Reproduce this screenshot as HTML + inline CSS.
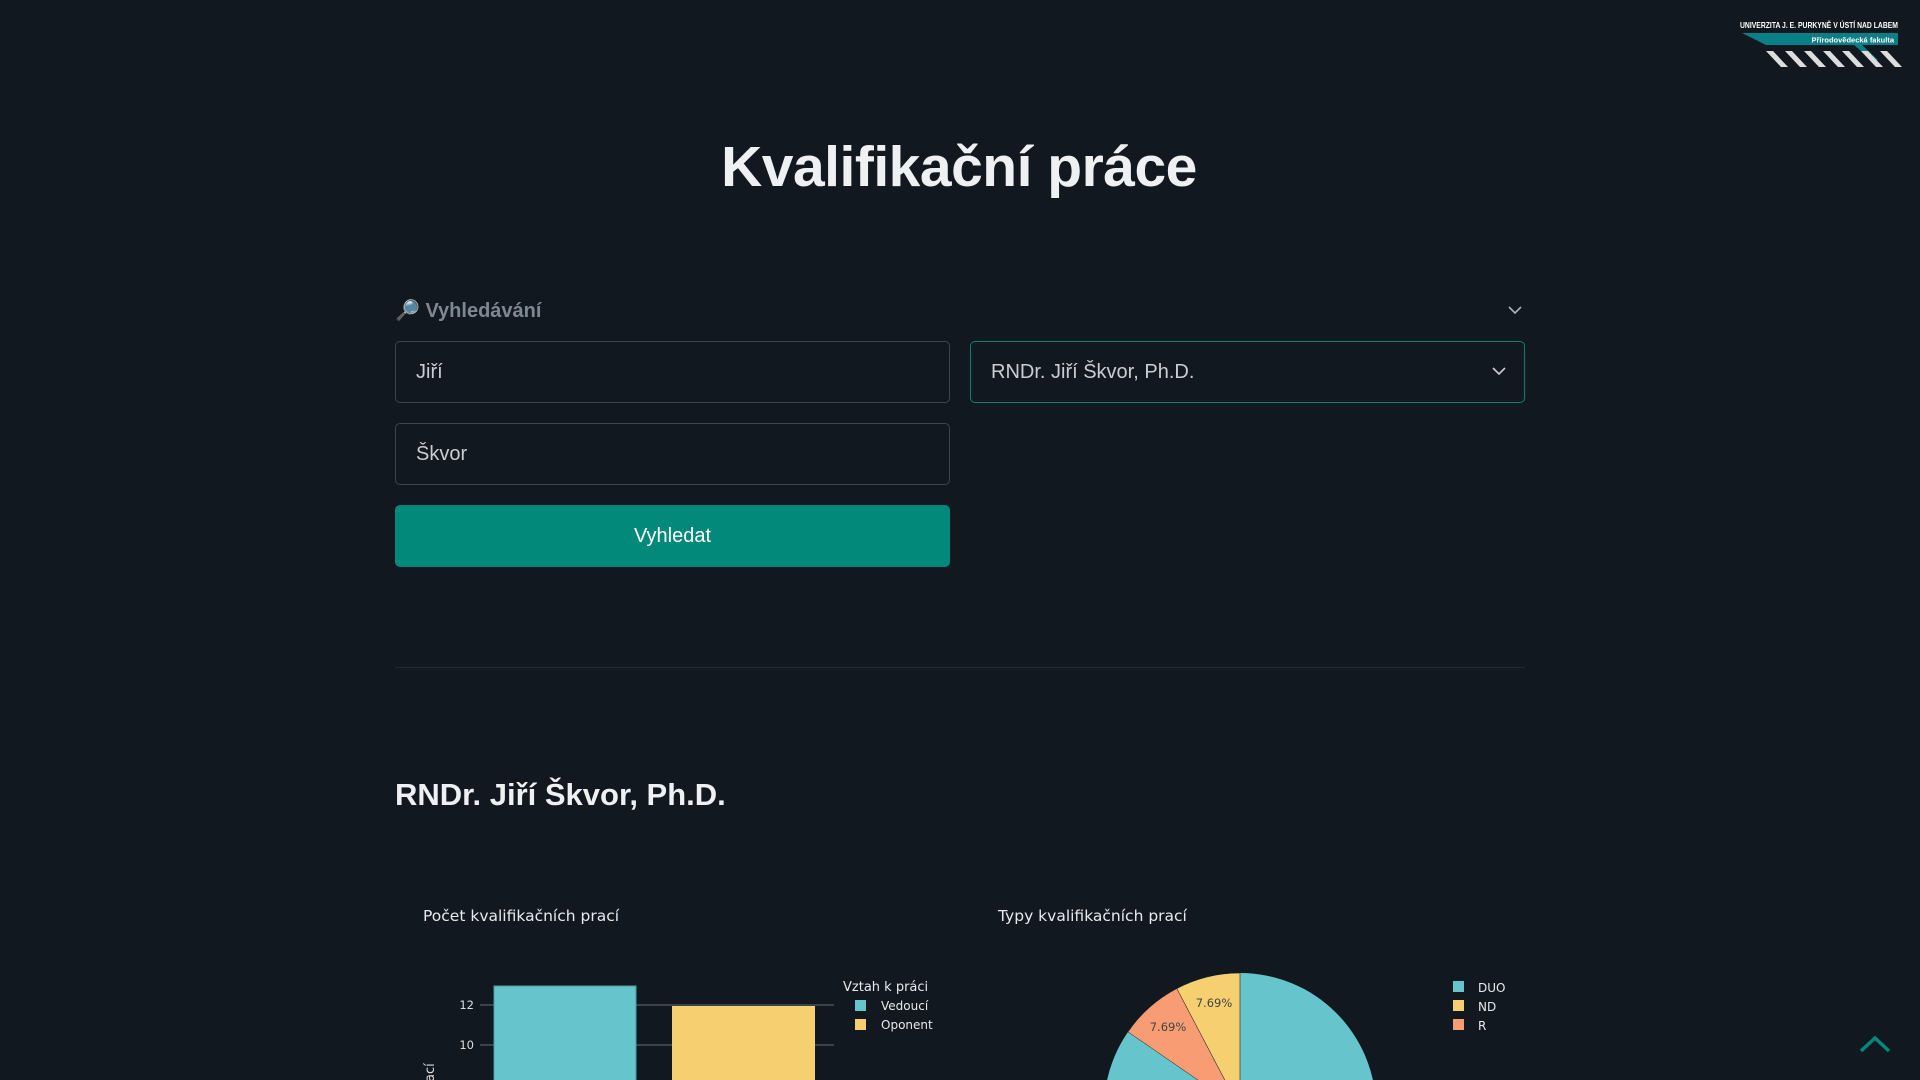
<!DOCTYPE html>
<html style="overflow:hidden"><head><meta charset="utf-8"><style>
*{margin:0;padding:0;box-sizing:border-box}
html,body{width:1920px;height:1080px;overflow:hidden}
body{background:#121820;font-family:"Liberation Sans",sans-serif;color:#e8eaed;position:relative}
.abs{position:absolute}
h1{position:absolute;left:0;width:1918px;text-align:center;top:134px;font-size:57px;font-weight:bold;color:#eef0f2;letter-spacing:-0.5px}
.inp{position:absolute;border:1px solid #3a4550;border-radius:5px;background:#121820;font-size:20px;color:#c9ced3;padding-left:20px;display:flex;align-items:center}
.btn{position:absolute;background:#02897a;border-radius:5px;color:#fff;font-size:20px;display:flex;align-items:center;justify-content:center}
.t{position:absolute;font-family:"DejaVu Sans",sans-serif;white-space:nowrap}
</style></head><body>
<svg class="abs" style="left:1736px;top:16px" width="184" height="60">
<text x="4" y="12" font-family="Liberation Sans" font-weight="bold" font-size="8.3" fill="#fff" textLength="158" lengthAdjust="spacingAndGlyphs">UNIVERZITA J. E. PURKYNĚ V ÚSTÍ NAD LABEM</text>
<polygon points="6,17 162,17 162,29 30,29" fill="#0b7f86"/>
<text x="158" y="26.5" text-anchor="end" font-family="Liberation Sans" font-weight="bold" font-size="7.5" fill="#fff">Přírodovědecká fakulta</text>
<polygon points="118,29 126,29 142,44 136,44" fill="#0b7f86"/>
<g fill="#ddd">
<polygon points="30,35 37,35 52,51 45,51"/><polygon points="49,35 56,35 71,51 64,51"/><polygon points="68,35 75,35 90,51 83,51"/><polygon points="87,35 94,35 109,51 102,51"/><polygon points="106,35 113,35 128,51 121,51"/><polygon points="125,35 132,35 147,51 140,51"/><polygon points="144,35 151,35 166,51 159,51"/></g>
</svg>
<h1>Kvalifikační práce</h1>
<div class="t" style="left:395px;top:298px;font-size:20px;font-weight:bold;color:#7d8893;font-family:'Liberation Sans',sans-serif">🔎 Vyhledávání</div>
<svg class="abs" style="left:1506px;top:303px" width="18" height="14"><path d="M3 4l6 6 6-6" stroke="#aeb4ba" stroke-width="1.6" fill="none"/></svg>
<div class="inp" style="left:395px;top:341px;width:555px;height:62px">Jiří</div>
<div class="inp" style="left:395px;top:423px;width:555px;height:62px">Škvor</div>
<div class="btn" style="left:395px;top:505px;width:555px;height:62px">Vyhledat</div>
<div class="inp" style="left:970px;top:341px;width:555px;height:62px;border-color:#0c7f74">RNDr. Jiří Škvor, Ph.D.</div>
<svg class="abs" style="left:1490px;top:364px" width="18" height="14"><path d="M3 4l6 6 6-6" stroke="#c9ced3" stroke-width="1.6" fill="none"/></svg>
<div class="abs" style="left:395px;top:667px;width:1130px;height:1px;background:#222b34"></div>
<div class="abs" style="left:395px;top:777px;font-size:31px;font-weight:bold;color:#eef0f2">RNDr. Jiří Škvor, Ph.D.</div>
<div class="t" style="left:423px;top:907px;font-size:15.5px;color:#e8eaed">Počet kvalifikačních prací</div>
<svg class="abs" style="left:400px;top:960px" width="560" height="120" font-family="DejaVu Sans">
<line x1="80" y1="45" x2="434" y2="45" stroke="#666c72"/>
<line x1="80" y1="85" x2="434" y2="85" stroke="#666c72"/>
<rect x="94" y="26" width="142" height="100" fill="#66c5cc" stroke="#4a9aa0"/>
<rect x="272" y="46" width="143" height="80" fill="#f6cf71"/>
<text x="74" y="49" text-anchor="end" font-size="11.5" fill="#ddd">12</text>
<text x="74" y="89" text-anchor="end" font-size="11.5" fill="#ddd">10</text>
<text transform="translate(34,122) rotate(-90)" font-size="13" fill="#ddd">ací</text>
<text x="443" y="31" font-size="13" fill="#e8eaed">Vztah k práci</text>
<rect x="455" y="40" width="11" height="11" fill="#66c5cc"/><text x="481" y="50" font-size="12" fill="#e8eaed">Vedoucí</text>
<rect x="455" y="59" width="11" height="11" fill="#f6cf71"/><text x="481" y="69" font-size="12" fill="#e8eaed">Oponent</text>
</svg>
<div class="t" style="left:998px;top:907px;font-size:15.5px;color:#e8eaed">Typy kvalifikačních prací</div>
<svg class="abs" style="left:980px;top:960px" width="560" height="120" font-family="DejaVu Sans">
<g transform="translate(260,149)">
<circle r="136" fill="#66c5cc"/>
<path d="M0 0L0 -136A136 136 0 0 0 -63.2 -120.4Z" fill="#f6cf71" stroke="#121820" stroke-width="0.5"/>
<path d="M0 0L-63.2 -120.4A136 136 0 0 0 -112.0 -77.1Z" fill="#f89c74" stroke="#121820" stroke-width="0.5"/>
<line x1="0" y1="0" x2="0" y2="-136" stroke="#555" stroke-width="0.6"/>
<text x="-26" y="-102" text-anchor="middle" font-size="11.5" fill="#444">7.69%</text>
<text x="-72" y="-78" text-anchor="middle" font-size="11.5" fill="#444">7.69%</text>
</g>
<rect x="473" y="21" width="11" height="11" fill="#66c5cc"/><text x="498" y="32" font-size="12" fill="#e8eaed">DUO</text>
<rect x="473" y="40" width="11" height="11" fill="#f6cf71"/><text x="498" y="51" font-size="12" fill="#e8eaed">ND</text>
<rect x="473" y="59" width="11" height="11" fill="#f89c74"/><text x="498" y="70" font-size="12" fill="#e8eaed">R</text>
</svg>
<svg class="abs" style="left:1858px;top:1033px" width="34" height="22"><path d="M3 18L17 5L31 18" stroke="#02897a" stroke-width="3.5" fill="none"/></svg>
</body></html>
